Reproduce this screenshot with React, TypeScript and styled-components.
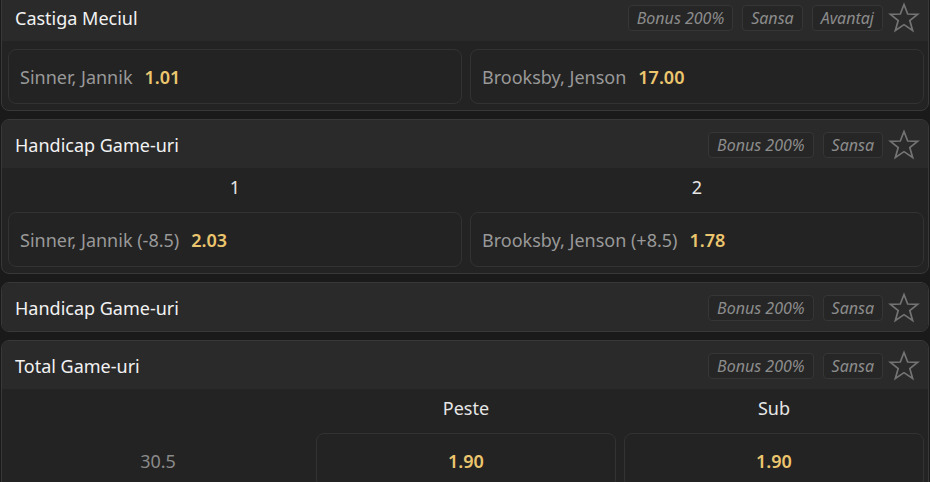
import React from 'react';
import styled, { createGlobalStyle } from 'styled-components';

const GlobalStyle = createGlobalStyle`
  *, *::before, *::after {
    box-sizing: border-box;
  }
  body {
    margin: 0;
    background: #1a1a1a;
    font-family: "Noto Sans", "Open Sans", sans-serif;
    overflow: hidden;
  }
`;

const Page = styled.div`
  display: flex;
  flex-direction: column;
  gap: 8px;
  padding: 0 1px;
  margin-top: -8px;
`;

const Card = styled.section`
  background: #232323;
  border: 1px solid #383838;
  border-radius: 8px;
  overflow: hidden;
`;

const Header = styled.div`
  display: flex;
  align-items: center;
  height: 48px;
  padding: 2px 7px 0 13px;
  background: #2a2a2a;
`;

const Title = styled.h3`
  flex: 1;
  margin: 0;
  font-size: 18px;
  font-weight: 400;
  color: #f2f2f2;
`;

const Tags = styled.div`
  display: flex;
  align-items: center;
  gap: 9px;
`;

const Tag = styled.span`
  display: inline-flex;
  align-items: center;
  height: 26px;
  padding: 0 8px;
  border: 1px solid #363636;
  border-radius: 4px;
  background: #262626;
  color: #8c8c8c;
  font-size: 16px;
  font-style: italic;
`;

const StarButton = styled.span`
  display: inline-flex;
  margin-left: -5px;
  width: 34px;
  height: 34px;
  align-items: center;
  justify-content: center;
`;

const Body = styled.div`
  padding: 8px 4px 6px 6px;
`;

const Grid = styled.div<{ $cols: number }>`
  display: grid;
  grid-template-columns: repeat(${(p) => p.$cols}, 1fr);
  column-gap: 8px;
`;

const Label = styled.div`
  height: 22px;
  line-height: 22px;
  margin-bottom: 14px;
  text-align: center;
  color: #e6e6e6;
  font-size: 18px;
`;

const Odd = styled.div<{ $center?: boolean }>`
  display: flex;
  align-items: center;
  justify-content: ${(p) => (p.$center ? 'center' : 'flex-start')};
  gap: 12px;
  height: 55px;
  padding: 0 11px;
  border: 1px solid #333;
  border-radius: 8px;
  background: #232323;
  font-size: 18px;
`;

const Line = styled.div`
  display: flex;
  align-items: center;
  justify-content: center;
  height: 55px;
  color: #8a8a8a;
  font-size: 18px;
`;

const Name = styled.span`
  color: #999;
`;

const Price = styled.span`
  color: #ecc66e;
  font-weight: 600;
`;

const Star = () => (
  <svg width="34" height="34" viewBox="0 0 24 24" fill="none" stroke="#747474" strokeWidth="1.2" strokeLinejoin="miter">
    <polygon points="12,2.5 14.6,9.2 21.6,9.4 16.1,13.8 18.1,20.8 12,16.7 5.9,20.8 7.9,13.8 2.4,9.4 9.4,9.2" />
  </svg>
);

const MarketHeader: React.FC<{ title: string; tags: string[] }> = ({ title, tags }) => (
  <Header>
    <Title>{title}</Title>
    <Tags>
      {tags.map((t) => (
        <Tag key={t}>{t}</Tag>
      ))}
      <StarButton>
        <Star />
      </StarButton>
    </Tags>
  </Header>
);

const App: React.FC = () => {
  return (
    <>
      <GlobalStyle />
      <Page>
        <Card>
          <MarketHeader title="Castiga Meciul" tags={['Bonus 200%', 'Sansa', 'Avantaj']} />
          <Body>
            <Grid $cols={2}>
              <Odd>
                <Name>Sinner, Jannik</Name>
                <Price>1.01</Price>
              </Odd>
              <Odd>
                <Name>Brooksby, Jenson</Name>
                <Price>17.00</Price>
              </Odd>
            </Grid>
          </Body>
        </Card>

        <Card>
          <MarketHeader title="Handicap Game-uri" tags={['Bonus 200%', 'Sansa']} />
          <Body>
            <Grid $cols={2}>
              <Label>1</Label>
              <Label>2</Label>
              <Odd>
                <Name>Sinner, Jannik (-8.5)</Name>
                <Price>2.03</Price>
              </Odd>
              <Odd>
                <Name>Brooksby, Jenson (+8.5)</Name>
                <Price>1.78</Price>
              </Odd>
            </Grid>
          </Body>
        </Card>

        <Card>
          <MarketHeader title="Handicap Game-uri" tags={['Bonus 200%', 'Sansa']} />
        </Card>

        <Card>
          <MarketHeader title="Total Game-uri" tags={['Bonus 200%', 'Sansa']} />
          <Body>
            <Grid $cols={3}>
              <Label />
              <Label>Peste</Label>
              <Label>Sub</Label>
              <Line>30.5</Line>
              <Odd $center>
                <Price>1.90</Price>
              </Odd>
              <Odd $center>
                <Price>1.90</Price>
              </Odd>
            </Grid>
          </Body>
        </Card>
      </Page>
    </>
  );
};

export default App;
